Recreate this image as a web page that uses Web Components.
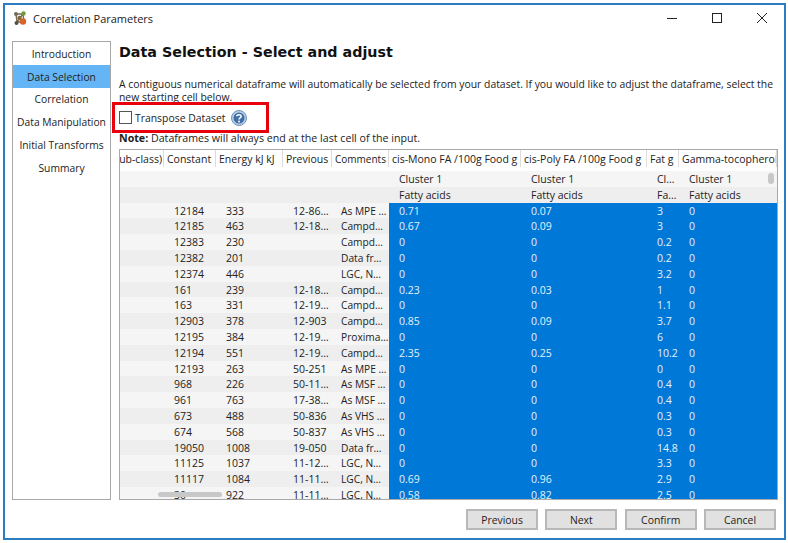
<!DOCTYPE html>
<html>
<head>
<meta charset="utf-8">
<title>Correlation Parameters</title>
<style>
    html, body { margin: 0; background: #fff; }
    body { font: 10.4px "Open Sans", "Noto Sans", sans-serif; color: #1c1c1c; }
</style>
</head>
<body>
<wizard-window>
    <window-title slot="title">Correlation Parameters</window-title>
    <side-nav slot="nav">
        <nav-item>Introduction</nav-item>
        <nav-item selected>Data Selection</nav-item>
        <nav-item>Correlation</nav-item>
        <nav-item>Data Manipulation</nav-item>
        <nav-item>Initial Transforms</nav-item>
        <nav-item>Summary</nav-item>
    </side-nav>
    <selection-page slot="page"></selection-page>
    <wizard-button slot="buttons">Previous</wizard-button>
    <wizard-button slot="buttons">Next</wizard-button>
    <wizard-button slot="buttons">Confirm</wizard-button>
    <wizard-button slot="buttons">Cancel</wizard-button>
</wizard-window>

<script>
class WizardWindow extends HTMLElement {
    constructor(){
        super();
        var root = this.attachShadow({mode:'open'});
        root.innerHTML = `
            <style>
                :host {
                    display: flex;
                    flex-direction: column;
                    box-sizing: border-box;
                    width: 783px;
                    height: 537px;
                    margin: 3px 0 0 3px;
                    border: 2px solid #2b7cc0;
                    background: #fff;
                }
                .body {
                    display: grid;
                    grid-template-columns: 99px 1fr;
                    column-gap: 8px;
                    padding: 0 6px 0 7px;
                    height: 459px;
                }
                .buttons {
                    display: flex;
                    justify-content: flex-end;
                    gap: 7.33px;
                    padding: 9px 8px 0 0;
                }
            </style>
            <slot name="title"></slot>
            <div class="body">
                <slot name="nav"></slot>
                <slot name="page"></slot>
            </div>
            <div class="buttons"><slot name="buttons"></slot></div>
        `;
    }
}
customElements.define('wizard-window', WizardWindow);

class WindowTitle extends HTMLElement {
    constructor(){
        super();
        var root = this.attachShadow({mode:'open'});
        root.innerHTML = `
            <style>
                :host {
                    display: flex;
                    align-items: center;
                    box-sizing: border-box;
                    height: 36px;
                    padding: 0 17px 10px 8px;
                    font-size: 11px;
                    color: #222;
                }
                .app { width: 14px; height: 15px; margin-right: 6px; }
                .text { flex: 1; }
                .controls { display: flex; gap: 35px; }
                .controls svg { width: 10px; height: 10px; display: block; }
            </style>
            <svg class="app" viewBox="0 0 14 15">
                <path d="M3 3 L10 3 L4 11 L11 11 M3 3 L4 11 M10 3 L11 11" stroke="#7a6a50" stroke-width="1.4" fill="none"/>
                <circle cx="3" cy="3" r="2" fill="#6d6d5a"/>
                <circle cx="10.5" cy="2.5" r="2.2" fill="#6f9a3c"/>
                <circle cx="6.5" cy="7" r="2.2" fill="#7d6a48"/>
                <circle cx="3.5" cy="12" r="2" fill="#55504a"/>
                <circle cx="10" cy="10.5" r="3.2" fill="#d8642a"/>
            </svg>
            <span class="text"><slot></slot></span>
            <div class="controls">
                <svg viewBox="0 0 10 10"><path d="M0 5.5 H10" stroke="#222" fill="none"/></svg>
                <svg viewBox="0 0 10 10"><rect x=".5" y=".5" width="9" height="9" stroke="#222" fill="none"/></svg>
                <svg viewBox="0 0 10 10"><path d="M0 0 L10 10 M10 0 L0 10" stroke="#222" fill="none"/></svg>
            </div>
        `;
    }
}
customElements.define('window-title', WindowTitle);

class SideNav extends HTMLElement {
    constructor(){
        super();
        var root = this.attachShadow({mode:'open'});
        root.innerHTML = `
            <style>
                :host {
                    display: block;
                    box-sizing: border-box;
                    border: 1px solid #a8a8a8;
                    height: 459px;
                    background: #fff;
                }
            </style>
            <slot></slot>
        `;
    }
}
customElements.define('side-nav', SideNav);

class NavItem extends HTMLElement {
    constructor(){
        super();
        var root = this.attachShadow({mode:'open'});
        root.innerHTML = `
            <style>
                :host {
                    display: flex;
                    align-items: center;
                    justify-content: center;
                    box-sizing: border-box;
                    height: 22.8px;
                    padding-top: 1px;
                    font-size: 10.3px;
                    color: #222;
                    white-space: nowrap;
                }
                :host([selected]) { background: #64b5f6; }
            </style>
            <slot></slot>
        `;
    }
}
customElements.define('nav-item', NavItem);

class WizardButton extends HTMLElement {
    constructor(){
        super();
        var root = this.attachShadow({mode:'open'});
        root.innerHTML = `
            <style>
                :host {
                    display: flex;
                    align-items: center;
                    justify-content: center;
                    box-sizing: border-box;
                    width: 72px;
                    height: 21px;
                    background: #e1e1e1;
                    border: 2px solid #b8b8b8;
                    font-size: 10.4px;
                    color: #222;
                }
            </style>
            <slot></slot>
        `;
    }
}
customElements.define('wizard-button', WizardButton);

class HelpIcon extends HTMLElement {
    constructor(){
        super();
        var root = this.attachShadow({mode:'open'});
        root.innerHTML = `
            <style>
                :host { display: block; width: 16px; height: 16px; }
                svg { display: block; }
            </style>
            <svg width="16" height="16" viewBox="0 0 16 16">
                <circle cx="8" cy="8" r="7.5" fill="#b9cde4" stroke="#6f93bd"/>
                <circle cx="8" cy="8" r="5.5" fill="#3f6ea8"/>
                <path d="M5.8 6.2 C5.9 4.2 10.2 4.1 10.2 6.3 C10.2 7.9 8 7.8 8 9.5" stroke="#fff" stroke-width="1.5" fill="none"/>
                <circle cx="8" cy="11.5" r="1" fill="#fff"/>
            </svg>
        `;
    }
}
customElements.define('help-icon', HelpIcon);

class TransposeBox extends HTMLElement {
    constructor(){
        super();
        var root = this.attachShadow({mode:'open'});
        root.innerHTML = `
            <style>
                :host {
                    display: flex;
                    align-items: center;
                    box-sizing: border-box;
                    position: relative;
                    width: 157px;
                    height: 31px;
                    margin: -2px 0 0 -7px;
                    padding-left: 4px;
                    border: 3px solid #e8000d;
                    background: #fff;
                    font-size: 10.4px;
                    color: #222;
                }
                .check {
                    box-sizing: border-box;
                    width: 13px;
                    height: 13px;
                    border: 1px solid #555;
                    background: #fff;
                    margin-right: 3px;
                }
                help-icon { margin-left: 6px; }
            </style>
            <span class="check"></span>
            <span>Transpose Dataset</span>
            <help-icon></help-icon>
        `;
    }
}
customElements.define('transpose-box', TransposeBox);

const COLUMNS = [
    { label:'ub-class)', width:44, clip:true },
    { label:'Constant', width:52 },
    { label:'Energy kJ kJ', width:67 },
    { label:'Previous', width:49 },
    { label:'Comments', width:57, tight:true },
    { label:'cis-Mono FA /100g Food g', width:132 },
    { label:'cis-Poly FA /100g Food g', width:126 },
    { label:'Fat g', width:32 },
    { label:'Gamma-tocopherol', width:98 }
];

const ROWS = [
    ['12184','333','12-86…','As MPE …','0.71','0.07','3','0'],
    ['12185','463','12-18…','Campd…','0.67','0.09','3','0'],
    ['12383','230','','Campd…','0','0','0.2','0'],
    ['12382','201','','Data fr…','0','0','0.2','0'],
    ['12374','446','','LGC, N…','0','0','3.2','0'],
    ['161','239','12-18…','Campd…','0.23','0.03','1','0'],
    ['163','331','12-19…','Campd…','0','0','1.1','0'],
    ['12903','378','12-903','Campd…','0.85','0.09','3.7','0'],
    ['12195','384','12-19…','Proxima…','0','0','6','0'],
    ['12194','551','12-19…','Campd…','2.35','0.25','10.2','0'],
    ['12193','263','50-251','As MPE …','0','0','0','0'],
    ['968','226','50-11…','As MSF …','0','0','0.4','0'],
    ['961','763','17-38…','As MSF …','0','0','0.4','0'],
    ['673','488','50-836','As VHS …','0','0','0.3','0'],
    ['674','568','50-837','As VHS …','0','0','0.3','0'],
    ['19050','1008','19-050','Data fr…','0','0','14.8','0'],
    ['11125','1037','11-12…','LGC, N…','0','0','3.3','0'],
    ['11117','1084','11-11…','LGC, N…','0.69','0.96','2.9','0'],
    ['30','922','11-11…','LGC, N…','0.58','0.82','2.5','0']
];

class DataGrid extends HTMLElement {
    constructor(){
        super();
        var root = this.attachShadow({mode:'open'});
        var tracks = COLUMNS.map(c => c.width + 'px').join(' ');

        var head = COLUMNS.map(c =>
            `<div class="th ${c.clip ? 'clip' : ''} ${c.tight ? 'tight' : ''}"><span>${c.label}</span></div>`).join('');

        var meta = (a, b, odd) => `
            <div class="row ${odd ? 'odd' : ''}">
                <div></div><div></div><div></div><div></div><div></div>
                <div class="td">${a}</div><div class="td">${a}</div><div class="td">${b}</div><div class="td">${a}</div>
            </div>`;

        var body = ROWS.map((r, i) => `
            <div class="row ${i % 2 ? 'odd' : ''}">
                <div></div>
                ${r.map((v, n) => `<div class="td ${n > 3 ? 'sel' : ''} ${n == 3 ? 'note' : ''}">${v}</div>`).join('')}
            </div>`).join('');

        root.innerHTML = `
            <style>
                :host {
                    display: block;
                    position: relative;
                    box-sizing: border-box;
                    height: 351px;
                    overflow: hidden;
                    border: 1px solid #a9a9a9;
                    background: #fff;
                    font-size: 10.5px;
                    color: #222;
                }
                .head, .row {
                    display: grid;
                    grid-template-columns: ${tracks};
                    width: max-content;
                }
                .head { height: 17px; margin-bottom: 4px; }
                .th {
                    box-sizing: border-box;
                    border-right: 1px solid #dcdcdc;
                    padding: 2px 0 0 3px;
                    white-space: nowrap;
                    overflow: hidden;
                    line-height: 15px;
                }
                .th.clip { display: flex; justify-content: flex-end; padding: 2px 1px 0 0; }
                .th.tight { font-size: 10px; }
                .row { height: 15.8px; background: #f5f5f5; }
                .row.odd { background: #eeeeee; }
                .td {
                    box-sizing: border-box;
                    padding: 1px 0 0 10px;
                    line-height: 14.8px;
                    white-space: nowrap;
                    overflow: hidden;
                }
                .td.note { padding-left: 9px; font-size: 10.2px; }
                .td.sel { background: #0078d7; color: #e6f1fb; }
                .thumb-h {
                    position: absolute;
                    left: 38px;
                    bottom: 2px;
                    width: 64px;
                    height: 5px;
                    border-radius: 3px;
                    background: #c8c8c8;
                }
                .thumb-v {
                    position: absolute;
                    right: 3px;
                    top: 23px;
                    width: 6px;
                    height: 11px;
                    border-radius: 3px;
                    background: #c8c8c8;
                }
            </style>
            <div class="head">${head}</div>
            ${meta('Cluster 1', 'Cl…', false)}
            ${meta('Fatty acids', 'Fa…', true)}
            ${body}
            <div class="thumb-h"></div>
            <div class="thumb-v"></div>
        `;
    }
}
customElements.define('data-grid', DataGrid);

class SelectionPage extends HTMLElement {
    constructor(){
        super();
        var root = this.attachShadow({mode:'open'});
        root.innerHTML = `
            <style>
                :host {
                    display: flex;
                    flex-direction: column;
                    min-width: 0;
                    font-size: 10.4px;
                    color: #222;
                }
                h1 {
                    box-sizing: border-box;
                    margin: 0;
                    height: 37px;
                    padding-top: 1px;
                    font: bold 14.3px/21px "DejaVu Sans", sans-serif;
                    color: #111;
                }
                p { margin: 0; line-height: 13px; white-space: nowrap; }
                .intro { height: 26px; white-space: normal; width: 662px; }
                .note { height: 16px; line-height: 11px; padding-bottom: 0; font-size: 10.65px; }
                b { font-weight: 700; }
            </style>
            <h1>Data Selection - Select and adjust</h1>
            <p class="intro">A contiguous numerical dataframe will automatically be selected from your dataset. If you would like to adjust the dataframe, select the new starting cell below.</p>
            <transpose-box></transpose-box>
            <p class="note"><b>Note:</b> Dataframes will always end at the last cell of the input.</p>
            <data-grid></data-grid>
        `;
    }
}
customElements.define('selection-page', SelectionPage);
</script>
</body>
</html>
